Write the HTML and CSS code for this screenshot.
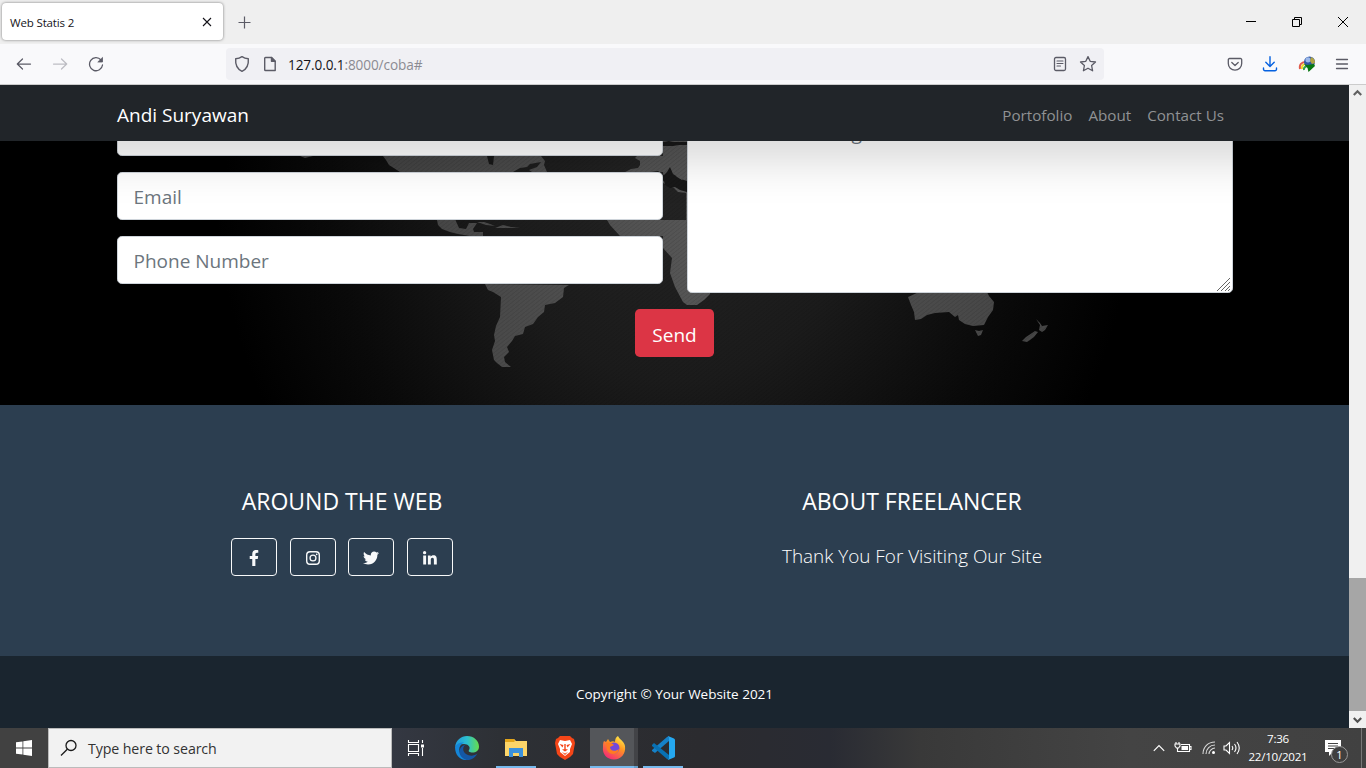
FILE: index.html
```html
<!DOCTYPE html>
<html lang="en">
<head>
<meta charset="utf-8">
<title>Web Statis 2</title>
<link rel="stylesheet" href="styles.css">
</head>
<body>
<div class="tabbar">
  <div class="tab"><span class="tab-title">Web Statis 2</span>
    <svg width="10" height="10" viewBox="0 0 10 10" fill="none" stroke="#15141a" stroke-width="1.1"><path d="M1 1l8 8M9 1L1 9"/></svg>
  </div>
  <svg class="newtab" width="13" height="13" viewBox="0 0 13 13" fill="none" stroke="#5b5b66" stroke-width="1.2"><path d="M6.5 .5v12M.5 6.5h12"/></svg>
  <div class="wincontrols">
    <svg width="12" height="12" viewBox="0 0 12 12" fill="none" stroke="#000"><path d="M1 5.5h10"/></svg>
    <svg width="12" height="12" viewBox="0 0 12 12" fill="none" stroke="#000"><path d="M1.5 3.5h7v7h-7zM3.5 3V1.5h7v7H9"/></svg>
    <svg width="12" height="12" viewBox="0 0 12 12" fill="none" stroke="#000"><path d="M1 1l10 10M11 1L1 11"/></svg>
  </div>
</div>
<div class="toolbar">
  <div class="navbtns">
    <svg width="16" height="16" viewBox="0 0 16 16" fill="none" stroke="#5b5b66" stroke-width="1.25" stroke-linecap="round" stroke-linejoin="round"><path d="M14.5 8h-13M6.5 3L1.3 8l5.2 5"/></svg>
    <svg width="16" height="16" viewBox="0 0 16 16" fill="none" stroke="#bdbdc3" stroke-width="1.25" stroke-linecap="round" stroke-linejoin="round"><path d="M1.5 8h13M9.5 3l5.2 5-5.2 5"/></svg>
    <svg width="16" height="16" viewBox="0 0 16 16" fill="none" stroke="#5b5b66" stroke-width="1.3" stroke-linecap="round"><path d="M13 4A6.5 6.5 0 1 0 14.5 9"/><path d="M14.5 1.8V6h-4.3z" fill="#5b5b66" stroke-width=".8" stroke-linejoin="round"/></svg>
  </div>
  <div class="urlbar">
    <svg width="16" height="18" viewBox="0 0 16 18" fill="none" stroke="#5b5b66" stroke-width="1.4" stroke-linejoin="round"><path d="M8 1.6C6.3 2.8 4 3.6 1.7 3.8 1.2 9.500 3 14 8 16.400 13 14 14.800 9.500 14.300 3.800 12 3.600 9.700 2.800 8 1.600z"/></svg>
    <svg class="pageicon" width="12" height="16" viewBox="0 0 12 16" fill="none" stroke="#5b5b66" stroke-width="1.4" stroke-linejoin="round"><path d="M1.500 1.500H7.500L11.200 5.200V14.500H1.500a.8.8 0 0 1-.8-.8V2.300a.8.8 0 0 1 .8-.8z"/><path d="M7.500 1.500v3.700h3.700z" fill="#5b5b66"/></svg>
    <span class="url"><b>127.0.0.1</b>:8000/coba#</span>
    <svg class="reader" width="14" height="16" viewBox="0 0 14 16" fill="none" stroke="#5b5b66" stroke-width="1.3" stroke-linecap="round"><rect x="1.500" y="1.500" width="11" height="13" rx="1.500"/><path d="M4 5h6M4 7.500h6M4 10h3.500" stroke-width="1.100"/></svg>
    <svg width="18" height="18" viewBox="0 0 18 18" fill="none" stroke="#5b5b66" stroke-width="1.300" stroke-linejoin="round"><path d="M9 1.600l2.200 4.700 5.300.7-3.900 3.500 1 5.300L9 13.200l-4.600 2.600 1-5.300L1.500 7l5.300-.7z"/></svg>
  </div>
  <div class="tools">
    <svg width="16" height="16" viewBox="0 0 16 16" fill="none" stroke="#5b5b66" stroke-width="1.300" stroke-linecap="round" stroke-linejoin="round"><path d="M2.500 2.500h11a1.200 1.200 0 0 1 1.200 1.200V7.500a6.700 6.700 0 0 1-13.400 0V3.700a1.200 1.200 0 0 1 1.200-1.200z"/><path d="M4.800 6.500L8 9.500l3.200-3"/></svg>
    <svg width="16" height="16" viewBox="0 0 16 16" fill="none" stroke="#0561e0" stroke-width="1.400" stroke-linecap="round" stroke-linejoin="round"><path d="M8 .8v9.400M3.800 6.300L8 10.500l4.200-4.200M1.500 12v1.200a1.500 1.500 0 0 0 1.500 1.500h10a1.500 1.500 0 0 0 1.500-1.500V12"/></svg>
    <svg width="18" height="18" viewBox="0 0 18 18"><path d="M2 14C1 9 4 7 8 7" fill="none" stroke="#e05a4a" stroke-width="2"/><path d="M4 14c-.5-3 1-5 4-5" fill="none" stroke="#ecd829" stroke-width="2"/><path d="M6 15c-.5-2 0-3 3-4" fill="none" stroke="#33a34a" stroke-width="2"/><circle cx="11.500" cy="7" r="5.500" fill="#3158a6"/><circle cx="10" cy="4.800" r="2.600" fill="#9bb8ea"/><path d="M13 2c3 1 4 3 4 6l-3 1-2-3z" fill="#b1a443"/><path d="M6 9l3 1 7-1 1 2-6.500 6-1-4z" fill="#087811"/></svg>
    <svg width="14" height="14" viewBox="0 0 14 14" stroke="#5b5b66" stroke-width="1.300" stroke-linecap="round"><path d="M1.500 2.500h11M1.500 7h11M1.500 11.500h11"/></svg>
  </div>
</div>
<div class="viewport">
  <div class="page">
    <nav class="navbar">
      <a class="brand">Andi Suryawan</a>
      <div class="links"><a>Portofolio</a><a>About</a><a>Contact Us</a></div>
    </nav>
    <section class="contact">
      <svg class="map" viewBox="0 141 1349 264" width="1349" height="264">
        <defs>
          <radialGradient id="glow" gradientUnits="userSpaceOnUse" cx="675" cy="180" r="460" gradientTransform="translate(0 -20) scale(1 1.100)"><stop offset="0" stop-color="#242424"/><stop offset=".4" stop-color="#1b1b1b"/><stop offset=".75" stop-color="#0a0a0a"/><stop offset="1" stop-color="#000"/></radialGradient>
          <linearGradient id="land" gradientUnits="userSpaceOnUse" x1="380" y1="0" x2="1050" y2="0"><stop offset="0" stop-color="#424242"/><stop offset=".45" stop-color="#555"/><stop offset="1" stop-color="#454545"/></linearGradient>
          <pattern id="weave" width="5" height="4" patternUnits="userSpaceOnUse"><path d="M-1 5L6 -1" stroke="#000" stroke-opacity=".1" stroke-width="1"/></pattern>
        </defs>
        <rect y="141" width="1349" height="264" fill="url(#glow)"/>
        <g fill="url(#land)">
          <path d="M300 156l5 2 8-2zM383 156l3 4 3 5 11 7H513l7-4 7-1 3-3 11-2-4 5-8 3 3 2 15 0-3-7 1-4-4-5zM437 220l1 5 4 4 8 3 8 2 12 2h13v-4h-9l-1-3 4-6-8 0-3 6-7-1-4-9zM477 222l7 0 6 2 5 2-9-1zM495 228l8-3 8 2 9 0-9 1z"/>
          <path d="M485 284l3 6 5 2 8 5-1 20-4 9-2 9 1 6-3 9 2 10 3 3 5 4 9 0-6-5-1-5 5-5-2-5 5-6 3-5 8-2 2-7 8-3 5-7 6-5 1-7 10-2 8-6 1-9 5-3z"/>
          <path d="M635 158l5 3 0 4-2 3-7 1-6 3h38v11l11 5 4 4 9 1V141h-24v15h-26zM607 220l3 5 10 11h43v12l9 10-2 15 5 14 8 15 4 3h10l7-5 6-6V190l-24-7v37z"/>
          <path d="M908 297l3 8 3 7 1 8 6-1 6-4 8-2 14-1 6 5 3-2 1 5 6 4 8 2 11-1 4-8 5-7 1-8-5-6-2-4h-68zM975 330l4 1 4-1-2 5-3 1zM1036 319l4 4 2 3 6-1-3 5-3 2-3-2 1-5zM1035 331l3 1-4 5-4 3-3 2-5-1 4-4z"/>
        </g>
        <path d="M487 156l2 8 4 1 1-9zM663 142l6-1 4 1 14 0v3l-8 0-6 1-10 0zM651 172l7-1 6 4 3-3 3-5 3 7 8 5 6 2v11l-7-2-5-3-5 1-5-3-1-4-5-2-3-4z" fill="#181818"/>
        <path d="M670 166l5 3 4 5 5 3-2 3-5-3-4-5z" fill="#555"/>
        <rect y="141" width="1349" height="264" fill="url(#weave)"/>
      </svg>
      <div class="form">
        <div class="fields">
          <input class="field" type="text" aria-label="Name">
          <input class="field email" type="email" placeholder="Email">
          <input class="field phone" type="tel" placeholder="Phone Number">
        </div>
        <div class="message">
          <textarea class="field area" placeholder="Enter Your Message"></textarea>
          <svg class="grip" width="16" height="16" viewBox="0 0 16 16" stroke="#666" stroke-width="1"><path d="M1 14L14 1M5 14L14 5M9 14L14 9M12 14l2-2"/></svg>
        </div>
      </div>
      <button class="send">Send</button>
    </section>
    <footer class="footer">
      <div class="col">
        <h4>AROUND THE WEB</h4>
        <div class="socials">
          <a><svg width="16" height="16" viewBox="0 0 320 512"><path d="M279 288l14-93h-89v-60c0-25 13-50 53-50h40V7s-37-7-72-7c-73 0-121 44-121 125v70H23v93h81v224h100V288z"/></svg></a>
          <a><svg width="16" height="16" viewBox="0 0 16 16"><path fill-rule="evenodd" d="M5 1h6a4 4 0 0 1 4 4v6a4 4 0 0 1-4 4H5a4 4 0 0 1-4-4V5a4 4 0 0 1 4-4zM5.200 2.400a2.800 2.800 0 0 0-2.800 2.800v5.600a2.800 2.800 0 0 0 2.800 2.800h5.600a2.800 2.800 0 0 0 2.800-2.800V5.200a2.800 2.800 0 0 0-2.800-2.800z"/><path fill-rule="evenodd" d="M8 4.400a3.600 3.600 0 1 0 0 7.200 3.600 3.600 0 0 0 0-7.200zm0 1.300a2.300 2.300 0 1 1 0 4.600 2.300 2.300 0 0 1 0-4.600z"/><circle cx="11.700" cy="4.300" r=".85"/></svg></a>
          <a><svg width="16" height="16" viewBox="0 0 512 512"><path d="M459 152c.3 4.500.3 9 .3 13.600 0 138.700-105.600 298.600-298.600 298.600-59.500 0-114.700-17.200-161.100-47.100 8.400 1 16.600 1.300 25.300 1.300 49 0 94.200-16.600 130.300-44.800-46.100-1-84.800-31.200-98.100-72.800 6.500 1 13 1.600 19.800 1.600 9.400 0 18.800-1.300 27.600-3.600-48.100-9.700-84.100-52-84.100-103v-1.300c14 7.800 30.200 12.700 47.400 13.300-28.300-18.800-46.800-51-46.800-87.400 0-19.500 5.200-37.400 14.300-53 51.700 63.700 129.300 105.300 216.400 109.800-1.600-7.800-2.600-15.900-2.600-24 0-57.800 46.800-104.900 104.900-104.900 30.200 0 57.500 12.700 76.700 33.100 23.700-4.500 46.500-13.300 66.600-25.300-7.800 24.400-24.400 44.800-46.100 57.800 21.100-2.300 41.600-8.100 60.400-16.200-14.300 20.800-32.200 39.300-52.600 54.300z"/></svg></a>
          <a><svg width="16" height="16" viewBox="0 0 16 16"><path d="M1.200 5.500h2.900v9H1.200zM5.900 5.500h2.700v1.300c.6-1 1.500-1.500 2.800-1.500 2.800 0 3.400 1.800 3.400 4.200v5h-2.900V10c0-1.200-.1-2.300-1.500-2.300-1.300 0-1.600 1-1.600 2.200v4.600H5.900z"/><circle cx="2.600" cy="2.700" r="1.650"/></svg></a>
        </div>
      </div>
      <div class="col">
        <h4>ABOUT FREELANCER</h4>
        <p class="lead">Thank You For Visiting Our Site</p>
      </div>
    </footer>
    <div class="copyright"><small>Copyright © Your Website 2021</small></div>
  </div>
  <div class="scrollbar">
    <svg width="17" height="17" viewBox="0 0 17 17" fill="none" stroke="#606060" stroke-width="2.200"><path d="M4.800 10L8.500 6.300 12.200 10"/></svg>
    <div class="thumb"></div>
    <svg width="17" height="17" viewBox="0 0 17 17" fill="none" stroke="#505050" stroke-width="2.200"><path d="M4.800 7L8.500 10.700 12.200 7"/></svg>
  </div>
</div>
<div class="taskbar">
  <div class="start"><svg width="16" height="16" viewBox="0 0 16 16" fill="#fff"><path d="M0 2.300L6.500 1.400v6.200H0zM7.300 1.300L16 0v7.600H7.300zM0 8.400h6.500v6.200L0 13.700zM7.300 8.400H16V16l-8.700-1.300z"/></svg></div>
  <div class="search"><svg width="18" height="18" viewBox="0 0 18 18" fill="none" stroke="#1a1a1a" stroke-width="1.300"><circle cx="11" cy="6.500" r="5"/><path d="M7.300 10.200L1 16.500"/></svg><span>Type here to search</span></div>
  <div class="apps">
    <div class="app taskview"><svg width="18" height="16" viewBox="0 0 18 16" fill="none" stroke="#fff" stroke-width="1.100"><path d="M1.500 0v2.500h10V0M1.500 16v-2.500h10V16M1.500 4.500h10v7h-10zM15.500 0v3M15.500 8v8"/><path d="M14 4.500h3v3h-3z" fill="#fff" stroke="none"/></svg></div>
    <div class="app"><svg width="24" height="24" viewBox="0 0 24 24"><defs><linearGradient id="eg" x1="0" x2="1"><stop stop-color="#2299dc"/><stop offset=".5" stop-color="#2cc0d0"/><stop offset="1" stop-color="#66dc4b"/></linearGradient></defs><path d="M0 11C1 4 6 0 12 0c7 0 12 5 12 10.500 0 4-3 6-6.500 6-3 0-4.500-1-3.500-2.500 2-3-1-6-5-6-4 0-7 1-9 3z" fill="url(#eg)"/><path d="M0 11c2-4 6-5 9-4.500-4 2-6 6-4 10.500 1.500 4 5 6.500 9 6.500C6 25.500 0 20 0 11z" fill="#1486d8"/><path d="M10 9c-3 3-2 7 1 9 4 2.500 8 2 11.500-.5C20 22 16 24.500 12 24 6 22.500 3 17 5 13c1-2.500 3-3.500 5-4z" fill="#1457a5"/></svg></div>
    <div class="app open"><svg width="22" height="20" viewBox="0 0 22 20"><path d="M0 1h9l2 2h11v15H0z" fill="#fcd569"/><path d="M0 1h9l1 2-1 1H0z" fill="#e3a51a"/><path d="M4 19v-9h14v9h-4v-4H8v4z" fill="#3b91dc"/></svg></div>
    <div class="app"><svg width="20" height="24" viewBox="0 0 20 24"><path d="M5 0h10l2 2 2 1 1 4-2 11-3 3-5 3-5-3-3-3L0 7l1-4 2-1z" fill="#f54618"/><path d="M5 4l5 1 5-1 2 4-2 5 0 3-5 4-5-4 0-3-2-5z" fill="#fff"/><path d="M4.500 8l4 1-1 2.500zM15.500 8l-4 1 1 2.500zM9.300 8h1.400v5H9.300zM7 13.500l3-.5 3 .5-3 2zM7 16l3 1.500L13 16l-3 3z" fill="#f54618"/></svg></div>
    <div class="app active"><svg width="24" height="24" viewBox="0 0 24 24"><defs><linearGradient id="ff" x1=".8" y1="0" x2=".2" y2="1"><stop stop-color="#fff04c"/><stop offset=".4" stop-color="#ff9422"/><stop offset="1" stop-color="#f5217c"/></linearGradient></defs><path d="M2 5l2 1 2-3 2 3c2-1 4-1 5 0 0-3 1-5 3-6 1 3 6 5 7 10 1 8-4 13.500-11 13.500S0 18 1 11c0-3 0-4 1-6z" fill="url(#ff)"/><circle cx="12" cy="12" r="5.500" fill="#7348dc"/><path d="M4 7c3-1 6 0 8 2l-4 2c0 4 5 5 9 2-1 6-9 7-12 1z" fill="#ff7b22"/></svg></div>
    <div class="stack"></div>
    <div class="app open code"><svg width="24" height="24" viewBox="0 0 24 24"><path d="M18 5L4 17l-3-2v-1L16 1l2-1z" fill="#1681c8"/><path d="M1 9l2-2 15 12v5l-2-1L1 10z" fill="#0871b4"/><path d="M17 0l6 2.500q1 .5 1 1.500v16q0 1-1 1.500L17 24q1-1 1-2V2q0-1-1-2z" fill="#25a8f0"/></svg></div>
  </div>
  <div class="tray">
    <svg width="12" height="8" viewBox="0 0 12 8" fill="none" stroke="#fff" stroke-width="1.200"><path d="M.8 6.800L6 1.600l5.200 5.200"/></svg>
    <svg width="18" height="14" viewBox="0 0 18 14" fill="none" stroke="#fff" stroke-width="1.100"><path d="M7 3.500h8.500v7h-10M15.500 5.500h1.500v3h-1.500M2 1v2M5 1v2M1 3h5v2L4.500 7h-2L1 5zM3.500 7v3.500h2"/><path d="M7.500 5h6.500v4H7.500z" fill="#fff" stroke="none"/></svg>
    <svg width="14" height="14" viewBox="0 0 14 14" fill="none" stroke="#d8d8d8" stroke-width="1.100"><path d="M1 13C1 6 6 1 13 1M4 13c0-5 4-9 9-9M7 13c0-3 3-6 6-6"/><circle cx="11.500" cy="11.500" r="1.500" fill="#fff" stroke="none"/></svg>
    <svg width="18" height="14" viewBox="0 0 18 14" fill="none" stroke="#fff" stroke-width="1.100"><path d="M1 5h2l3.500-3.500v11L3 9H1zM9 5q1.500 2 0 4M11.500 3q3 4 0 8M14 1q4.500 6 0 12"/></svg>
    <div class="clock"><span>7:36</span><span class="date">22/10/2021</span></div>
    <div class="notice"><svg width="18" height="18" viewBox="0 0 18 18"><path d="M1 1h16v12H9l-4 4v-4H1z" fill="#fff"/><path d="M4 4.500h10M4 7h10M4 9.500h7" stroke="#444"/></svg><span class="count">1</span></div>
  </div>
</div>
</body>
</html>
```
FILE: styles.css
```css
* { box-sizing: border-box; }
body { margin: 0; width: 1366px; height: 768px; overflow: hidden; display: flex; flex-direction: column; font-family: "Open Sans", "Noto Sans", sans-serif; }
svg { display: block; flex: none; }

.tabbar { height: 44px; background: #efefef; display: flex; align-items: center; padding-left: 2px; }
.tab { width: 221px; height: 37px; margin-bottom: 1px; background: #fff; border-radius: 4px; box-shadow: 0 0 3px rgba(0,0,0,.5); display: flex; align-items: center; justify-content: space-between; padding: 1px 11px 0 8px; }
.tab-title { font-size: 11.500px; letter-spacing: -.15px; color: #15141a; }
.newtab { margin-left: 15px; }
.wincontrols { display: flex; gap: 34px; margin-left: auto; padding-right: 17px; }

.toolbar { height: 41px; background: #f9f9fb; border-bottom: 1px solid #ccc; display: flex; align-items: center; position: relative; z-index: 3; }
.navbtns { display: flex; gap: 20px; width: 226px; padding-left: 16px; }
.urlbar { width: 878px; height: 32px; background: #f0f0f4; border-radius: 4px; display: flex; align-items: center; padding: 0 7px 0 8px; }
.pageicon { margin-left: 14px; }
.url { margin: 1px 0 0 12px; font-size: 13.600px; letter-spacing: -.1px; color: #8b8b92; }
.url b { font-weight: 400; color: #15141a; }
.reader { margin: 0 12px 0 auto; }
.tools { flex: 1; display: flex; align-items: center; gap: 19.500px; justify-content: flex-end; padding-right: 17px; }

.viewport { height: 643px; display: flex; }
.page { width: 1349px; display: flex; flex-direction: column; }
.navbar { height: 56px; flex: none; background: #212529; display: flex; align-items: center; justify-content: space-between; padding: 3px 125px 0 117px; position: relative; z-index: 2; box-shadow: 0 16px 48px rgba(0,0,0,.175); }
.brand { color: #fff; font-size: 19px; }
.links { display: flex; gap: 16px; font-size: 15.200px; color: #909294; }

.contact { height: 264px; flex: none; background: #000; position: relative; overflow: hidden; display: flex; flex-direction: column; justify-content: flex-end; align-items: center; padding-bottom: 48px; }
.map { position: absolute; left: 0; top: 0; }
.form { position: relative; flex: none; width: 1116px; display: grid; grid-template-columns: 546px 546px; gap: 24px; }
.fields { display: flex; flex-direction: column; gap: 16px; }
.field { display: block; width: 100%; height: 48px; padding: 6px 16px 4px; border: 1px solid #ced4da; border-radius: 4.800px; background: #fff; font: 19px/30px "Open Sans", sans-serif; }
.field::placeholder { color: #6c757d; opacity: 1; }
.message { position: relative; }
.area { height: 185px; padding-top: 9px; resize: none; overflow: hidden; letter-spacing: -.45px; }
.grip { position: absolute; right: 1px; bottom: 0; }
.send { position: relative; flex: none; width: 79px; height: 48px; margin-top: 16px; padding: 4px 0 0; border: 0; border-radius: 4.800px; background: #dc3545; color: #fff; font: 19px "Open Sans", sans-serif; }

.footer { height: 251px; flex: none; background: #2c3e50; color: #fff; display: grid; grid-template-columns: 570px 570px; justify-content: center; padding-top: 80px; text-align: center; }
.footer h4 { margin: 0; font-size: 23px; font-weight: 400; line-height: 33px; }
.col { display: flex; flex-direction: column; align-items: center; padding-right: 95px; }
.socials { display: flex; gap: 12.600px; margin-top: 20px; }
.socials a { width: 46px; height: 38px; border: 1px solid #f8f9fa; border-radius: 4px; display: flex; align-items: center; justify-content: center; padding-top: 2px; }
.socials svg { fill: #f8f9fa; }
.lead { margin: 23px 0 0; font-size: 18.900px; line-height: 30px; font-weight: 300; white-space: nowrap; }
.copyright { height: 72px; flex: none; background: #1a252f; color: #fff; display: flex; align-items: center; justify-content: center; padding-top: 3px; }
.copyright small { font-size: 13.500px; }
.scrollbar { width: 17px; background: #f0f0f0; display: flex; flex-direction: column; justify-content: space-between; position: relative; z-index: 3; }
.thumb { height: 133px; background: #a6a6a6; margin-top: auto; }

.taskbar { height: 40px; background: linear-gradient(90deg, #414141 0, #414141 48px, #343842 392px, #2d3035 500px, #2b2b2f 700px, #292b33 830px, #393939 920px, #444 1130px, #414141 100%); display: flex; color: #fff; }
.start { width: 48px; display: flex; align-items: center; justify-content: center; }
.search { width: 344px; background: #f2f2f2; border: 1px solid #bbb; display: flex; align-items: center; gap: 10px; padding-left: 11px; color: #333; font-size: 14.200px; letter-spacing: -.1px; }
.apps { display: flex; padding-left: 4px; }
.app { width: 40px; margin-right: 9px; display: flex; align-items: center; justify-content: center; border-bottom: 2px solid transparent; padding-top: 2px; }
.taskview { margin-right: 11px; }
.open { border-color: #76b9ed; }
.active { width: 44px; margin: 0 0 0 -4px; background: #54565a; border-color: #76b9ed; }
.active svg { margin-left: 3px; }
.stack { width: 4px; background: #424347; border-bottom: 2px solid #659fcc; }
.code { margin-left: 5px; }
.tray { margin-left: auto; display: flex; align-items: center; }
.tray > svg:nth-child(1) { margin-right: 9px; }
.tray > svg:nth-child(2) { margin-right: 10px; }
.tray > svg:nth-child(3) { margin-right: 7px; }
.clock { width: 75px; display: flex; flex-direction: column; align-items: center; font-size: 11.600px; line-height: 18px; letter-spacing: -.25px; padding-right: 1px; }
.notice { position: relative; width: 50px; padding-left: 8px; }
.notice::after { content: ""; position: absolute; right: 4px; top: -11px; width: 1px; height: 40px; background: #777; }
.count { position: absolute; left: 15px; top: 7px; width: 17px; height: 17px; border: 1px solid #999; border-radius: 50%; background: #3f3f3f; font-size: 11px; line-height: 15px; text-align: center; }
```
